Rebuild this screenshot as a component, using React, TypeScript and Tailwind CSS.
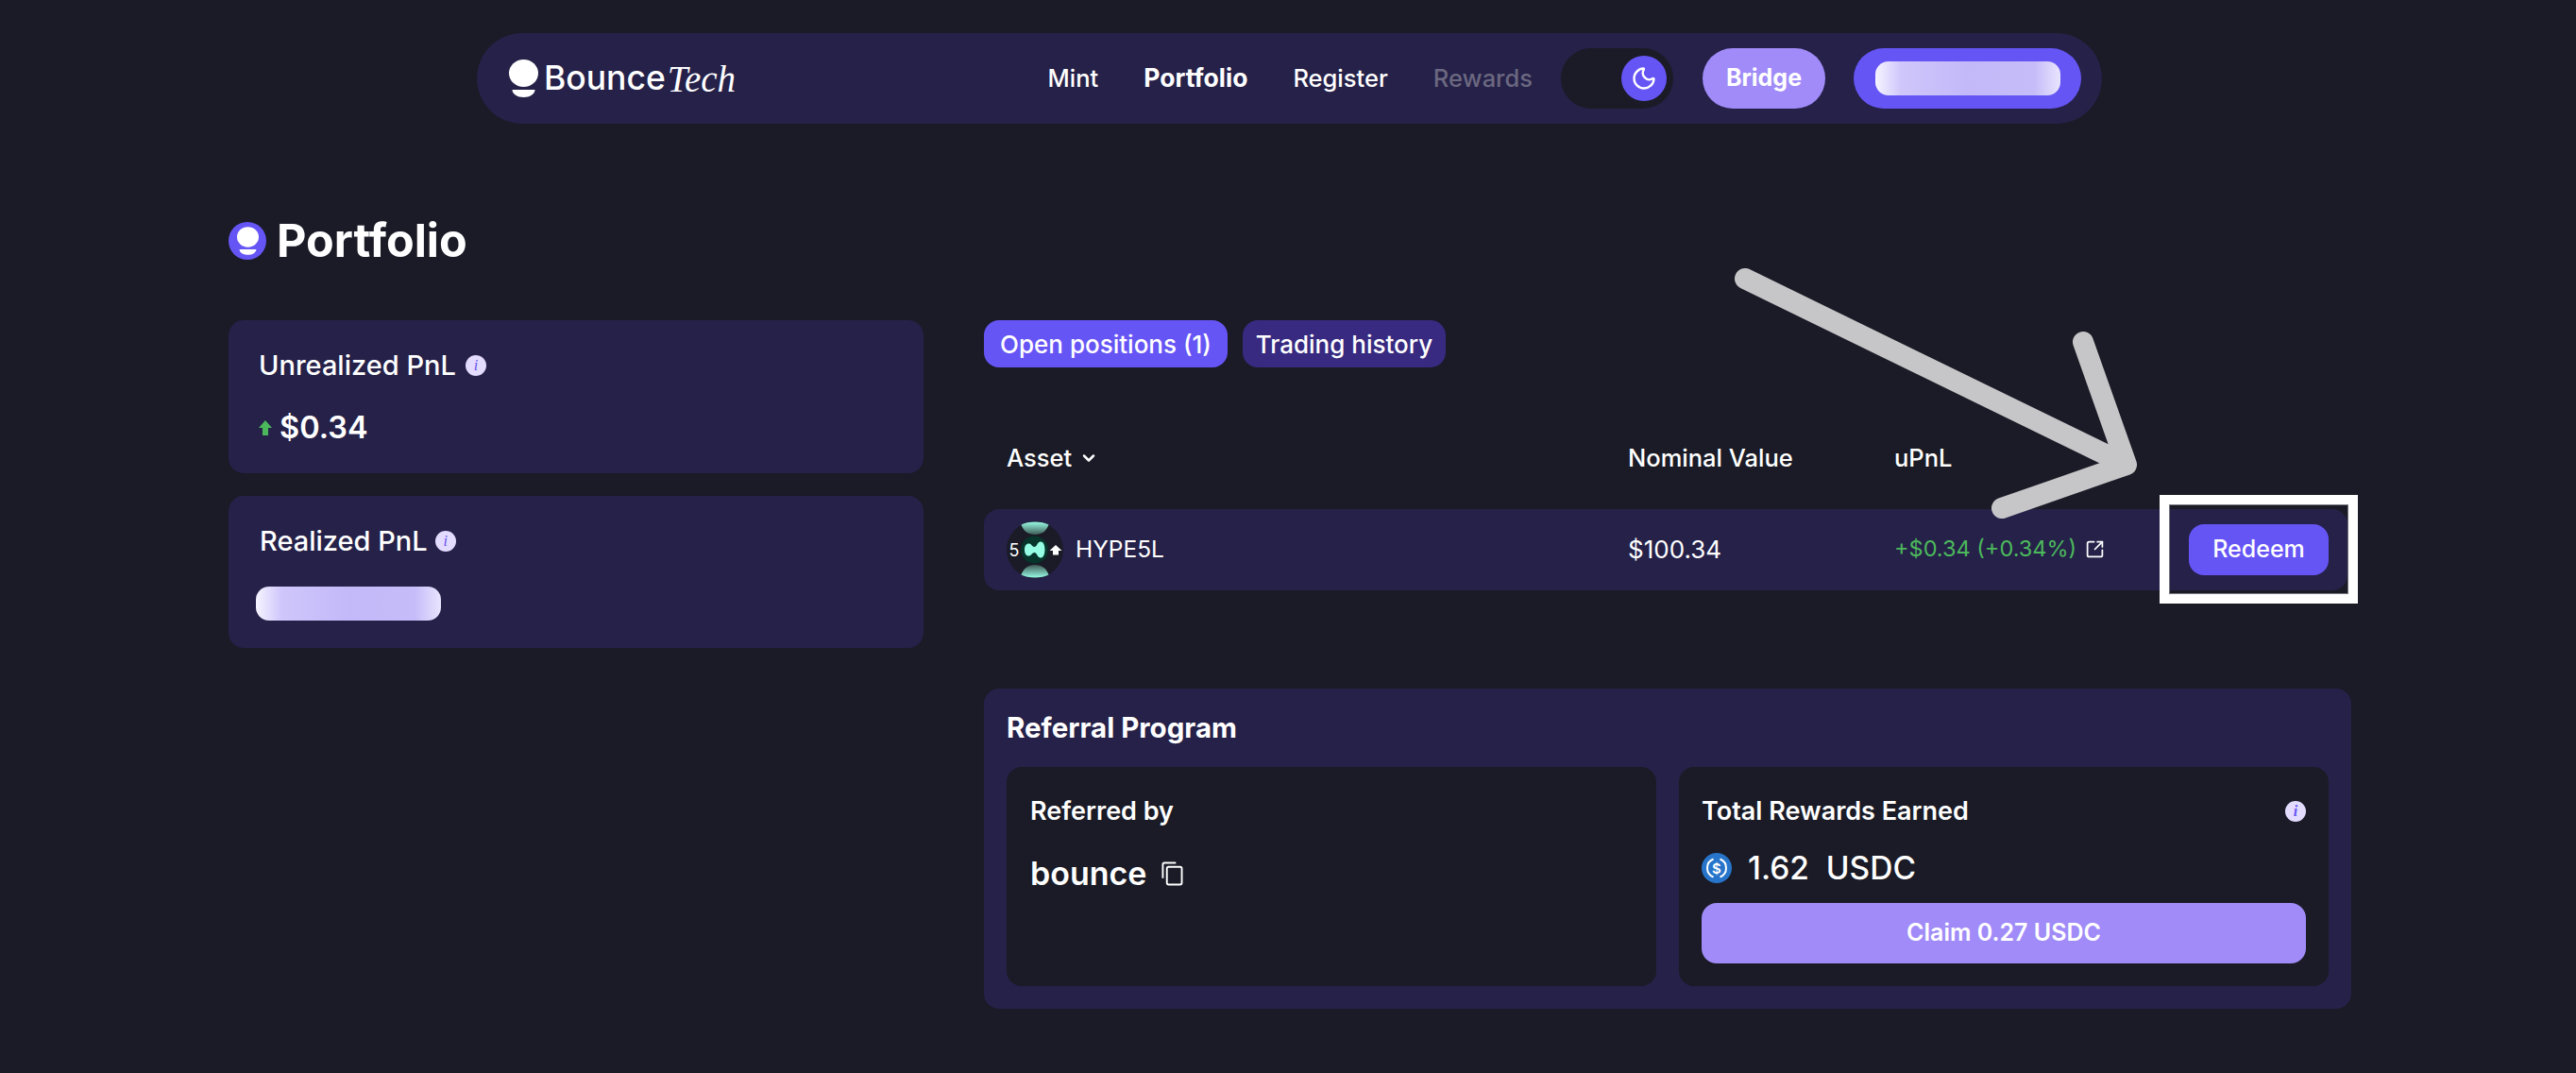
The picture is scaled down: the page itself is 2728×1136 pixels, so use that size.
import { ChevronDown, Moon, SquareArrowOutUpRight } from "lucide-react";

const font = { fontFamily: "Inter, sans-serif" };

const LogoMark = ({ className, color = "#ffffff" }: { className: string; color?: string }) => (
  <svg viewBox="0 0 31 40" className={className}>
    <ellipse cx="15.5" cy="14.5" rx="15.5" ry="14.5" fill={color} />
    <path d="M3.5 32h24c0 4.5-5.5 8-12 8s-12-3.5-12-8z" fill={color} />
  </svg>
);

const InfoDot = () => (
  <span className="flex h-[22px] w-[22px] items-center justify-center rounded-full bg-[#e4dcff] font-['Liberation_Serif'] text-[16px] italic leading-none text-[#6655f5]">
    i
  </span>
);

const BlurPill = ({ className }: { className: string }) => (
  <div
    className={`rounded-[14px] bg-[linear-gradient(90deg,#f6f4ff_0%,#cfc6fb_14%,#c3b9f9_50%,#c6bcf9_86%,#e9e5fe_100%)] ${className}`}
  />
);

const CopyIcon = () => (
  <svg viewBox="0 0 24 26" className="h-[26px] w-[23px]" fill="none" stroke="#ffffff" strokeWidth="2">
    <path d="M1.5 18V2.5a1.5 1.5 0 0 1 1.5-1.5h13" />
    <rect x="6" y="5.5" width="16.5" height="19.5" rx="2" />
  </svg>
);

const TokenIcon = () => (
  <svg viewBox="0 0 60 60" className="h-[60px] w-[60px] shrink-0">
    <defs>
      <linearGradient id="capTop" x1="0" y1="0" x2="0" y2="1">
        <stop offset="0" stopColor="#97fce4" />
        <stop offset="1" stopColor="#3f5a57" />
      </linearGradient>
      <linearGradient id="capBottom" x1="0" y1="1" x2="0" y2="0">
        <stop offset="0" stopColor="#97fce4" />
        <stop offset="1" stopColor="#3f5a57" />
      </linearGradient>
    </defs>
    <circle cx="30" cy="30" r="30" fill="#1a1b26" />
    <path d="M15.5 3.5C22 -0.5 38 -0.5 44.5 3.5 42 10.5 37 14 30 14S18 10.5 15.5 3.5z" fill="url(#capTop)" />
    <path d="M15.5 56.5C22 60.5 38 60.5 44.5 56.5 42 49.5 37 46 30 46S18 49.5 15.5 56.5z" fill="url(#capBottom)" />
    <circle cx="29.5" cy="30" r="14.5" fill="#07342b" />
    <path
      d="M19 30c0-5 2.5-7 5-6.500 2.500.5 3 3.500 5.500 3.500s3-5 6-5.500 5 3 5 8.500-2 9-5 8.500-3.500-5.500-6-5.500-3 3-5.500 3.500-5-1.500-5-6.500z"
      fill="#97fce4"
    />
    <path d="M52 25l6.500 6H55v4.500h-6V31h-3.500z" fill="#ffffff" />
    <text x="8" y="36.500" fill="#ffffff" fontSize="18" textAnchor="middle" fontFamily="Inter, sans-serif">
      5
    </text>
  </svg>
);

const UsdcIcon = () => (
  <svg viewBox="0 0 32 32" className="h-[32px] w-[32px] shrink-0">
    <circle cx="16" cy="16" r="16" fill="#2775ca" />
    <path d="M12.500 6.500a10.200 10.200 0 0 0 0 19M19.500 6.500a10.200 10.200 0 0 1 0 19" fill="none" stroke="#fff" strokeWidth="2" />
    <text x="16" y="21.500" fill="#ffffff" fontSize="15" fontWeight="600" textAnchor="middle" fontFamily="Inter, sans-serif">
      $
    </text>
  </svg>
);

const Nav = () => (
  <div className="flex justify-center pl-[3px] pt-[35px]">
    <nav className="flex h-[96px] w-[1721px] items-center rounded-full bg-[#252149] pl-[34px] pr-[22px]">
      <div className="flex items-center">
        <LogoMark className="h-[40px] w-[31px]" />
        <span className="ml-[6px] text-[35.5px] font-medium leading-none text-white">Bounce</span>
        <span className="ml-[2px] font-['Liberation_Serif'] text-[39px] italic leading-none text-white">Tech</span>
      </div>
      <div className="ml-auto flex items-center gap-12 text-[25.5px] font-medium text-white">
        <span>Mint</span>
        <span className="text-[26.5px] font-bold">Portfolio</span>
        <span>Register</span>
        <span className="text-[#6b6880]">Rewards</span>
      </div>
      <div className="ml-[30px] flex h-[64px] w-[119px] items-center justify-end rounded-full bg-[#1a1b26] pr-[7px]">
        <span className="flex h-[48px] w-[48px] items-center justify-center rounded-full bg-[#6655f5]">
          <Moon size={28} color="#ffffff" strokeWidth={2} />
        </span>
      </div>
      <button className="ml-[31px] h-[64px] w-[130px] rounded-full bg-[#a08bf8] text-[25px] font-bold text-white">
        Bridge
      </button>
      <div className="ml-[30px] flex h-[64px] w-[241px] items-center justify-center rounded-full bg-[#6655f5]">
        <BlurPill className="h-[36px] w-[196px]" />
      </div>
    </nav>
  </div>
);

const LeftColumn = () => (
  <div className="flex w-[736px] flex-col gap-[24px]">
    <div className="h-[162px] rounded-[16px] bg-[#252149] pl-[32px] pt-[30px]">
      <div className="flex h-[36px] items-center gap-[10px] text-[29px] font-medium text-white">
        Unrealized PnL <InfoDot />
      </div>
      <div className="mt-[32px] flex items-center gap-[8px] text-[32.5px] font-semibold leading-none text-white">
        <svg viewBox="0 0 14 16" className="h-[16px] w-[14px]">
          <path d="M7 0l7 8H10v8H4V8H0z" fill="#4cb85c" />
        </svg>
        $0.34
      </div>
    </div>
    <div className="h-[161px] rounded-[16px] bg-[#252149] pl-[33px] pt-[30px]">
      <div className="flex h-[36px] items-center gap-[8px] text-[29px] font-medium text-white">
        Realized PnL <InfoDot />
      </div>
      <BlurPill className="-ml-[4px] mt-[30px] h-[36px] w-[196px]" />
    </div>
  </div>
);

const Positions = () => (
  <div>
    <div className="flex gap-[16px] text-[26px] font-medium text-white">
      <button className="flex h-[50px] w-[258px] items-center justify-center rounded-[16px] bg-[#6655f5]">
        Open positions (1)
      </button>
      <button className="flex h-[50px] w-[215px] items-center justify-center rounded-[16px] bg-[#372a80]">
        Trading history
      </button>
    </div>
    <div className="mt-[74px] flex h-[44px] items-center pl-[24px] text-[25.500px] font-medium text-white">
      <div className="flex w-[658px] items-center gap-[8px]">
        Asset <ChevronDown size={20} strokeWidth={3} />
      </div>
      <div className="w-[282px]">Nominal Value</div>
      <div>uPnL</div>
    </div>
    <div className="mt-[32px] flex h-[86px] w-[1444px] items-center rounded-[16px] bg-[#252149] pl-[24px] pr-[20px] text-[25px] text-white">
      <div className="flex w-[658px] items-center gap-[13px] text-[24.500px]">
        <TokenIcon />
        <span className="-mt-[2px]">HYPE5L</span>
      </div>
      <div className="-mt-[2px] w-[282px] text-[26px]">$100.34</div>
      <div className="-mt-[2px] flex items-center gap-[9px] text-[23.500px] text-[#4cb85c]">
        +$0.34 (+0.34%)
        <SquareArrowOutUpRight size={21} color="#ffffff" strokeWidth={2} />
      </div>
      <button className="ml-auto h-[54px] w-[148px] rounded-[16px] bg-[#6655f5] font-medium">Redeem</button>
    </div>
  </div>
);

const Referral = () => (
  <div className="mt-[104px] h-[339px] w-[1448px] rounded-[16px] bg-[#252149] px-[24px]">
    <div className="flex h-[83px] items-center text-[29.500px] font-bold text-white">Referral Program</div>
    <div className="grid grid-cols-2 gap-[24px] text-white">
      <div className="h-[232px] rounded-[16px] bg-[#1a1b26] pl-[25px] pt-[30px]">
        <div className="text-[27px] font-semibold leading-[34px]">Referred by</div>
        <div className="mt-[26px] flex items-center gap-[16px] text-[34px] font-semibold leading-[46px]">
          bounce <CopyIcon />
        </div>
      </div>
      <div className="h-[232px] rounded-[16px] bg-[#1a1b26] px-[24px] pt-[30px]">
        <div className="flex items-center justify-between text-[27px] font-semibold leading-[34px]">
          Total Rewards Earned <InfoDot />
        </div>
        <div className="mt-[21px] flex h-[44px] items-center gap-[17px] text-[33.500px] font-medium">
          <UsdcIcon />
          <span>1.62&nbsp;&nbsp;USDC</span>
        </div>
        <button className="mt-[15px] h-[64px] w-full rounded-[16px] bg-[#a08bf8] text-[25px] font-semibold">
          Claim 0.27 USDC
        </button>
      </div>
    </div>
  </div>
);

export default function App() {
  return (
    <div className="relative h-[1136px] w-full overflow-hidden bg-[#1a1b26]" style={font}>
      <Nav />
      <div className="pl-[242px] pt-[104px]">
        <div className="flex h-[40px] items-center gap-[11px]">
          <span className="flex h-[40px] w-[40px] items-center justify-center rounded-full bg-[#6655f5]">
            <LogoMark className="h-[30px] w-[23px]" />
          </span>
          <h1 className="text-[48.500px] font-bold leading-none text-white">Portfolio</h1>
        </div>
        <div className="mt-[64px] flex gap-[64px]">
          <LeftColumn />
          <div>
            <Positions />
            <Referral />
          </div>
        </div>
      </div>
      {/* annotation drawn over the screenshot */}
      <svg className="absolute left-0 top-0" width="2728" height="1136" fill="none" opacity="0.96">
        <path
          d="M1848 295L2252 492M2206 362L2252 492L2120 538"
          stroke="#cdcdcf"
          strokeWidth="22"
          strokeLinecap="round"
          strokeLinejoin="round"
        />
      </svg>
      <div className="absolute left-[2287px] top-[524px] h-[115px] w-[210px] border-[10px] border-white shadow-[inset_0_0_0_1px_#77777f]" />
    </div>
  );
}
